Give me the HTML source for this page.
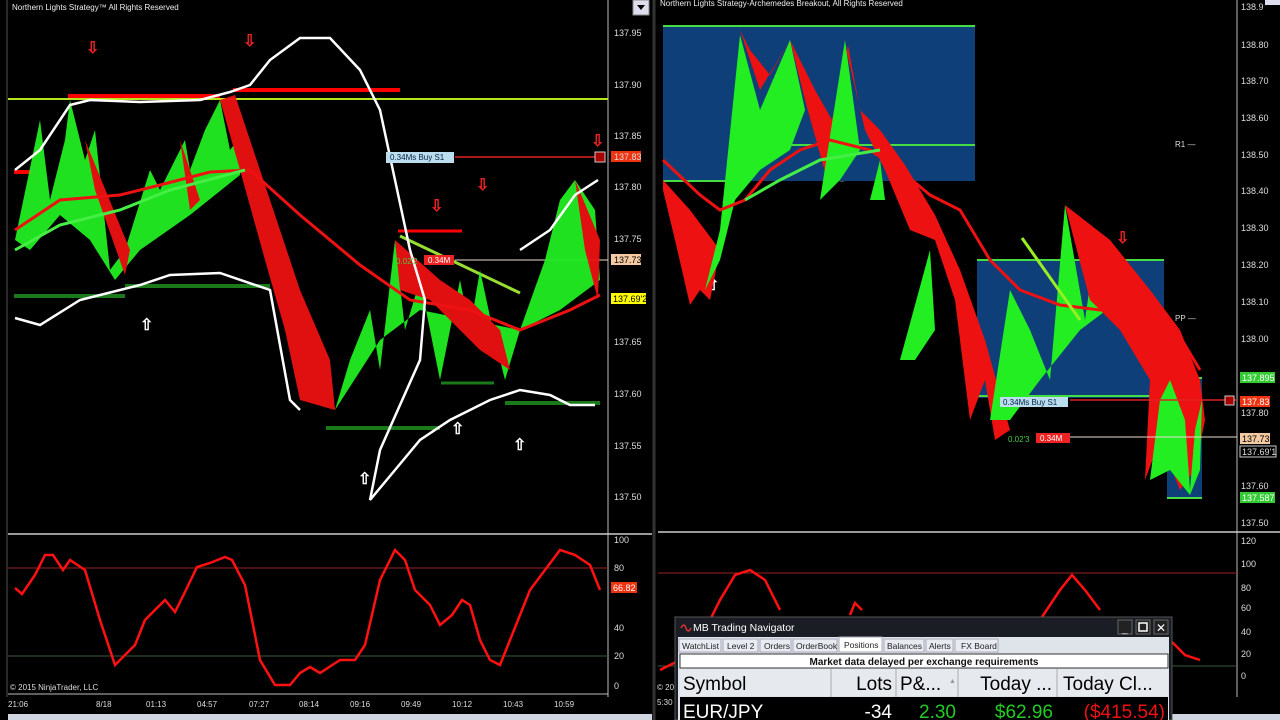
<!DOCTYPE html>
<html><head><meta charset="utf-8"><style>
html,body{margin:0;padding:0;background:#000;width:1280px;height:720px;overflow:hidden;font-family:"Liberation Sans",sans-serif}
svg{display:block}
.ax{fill:#ddd;font-size:9px;font-family:"Liberation Sans",sans-serif}
.t{fill:#eee;font-size:8px}
</style></head><body>
<svg width="1280" height="720" viewBox="0 0 1280 720" xmlns="http://www.w3.org/2000/svg">
<rect width="1280" height="720" fill="#000"/>
<line x1="7" y1="0" x2="7" y2="697" stroke="#555"/>
<line x1="608" y1="0" x2="608" y2="697" stroke="#bbb"/>
<line x1="8" y1="534" x2="652" y2="534" stroke="#ccc" stroke-width="1.5"/>
<line x1="8" y1="694" x2="608" y2="694" stroke="#bbb"/>
<line x1="654" y1="0" x2="654" y2="720" stroke="#333" stroke-width="3"/>
<line x1="1237" y1="0" x2="1237" y2="697" stroke="#bbb"/>
<line x1="658" y1="532" x2="1280" y2="532" stroke="#ccc" stroke-width="1.5"/>
<text x="12" y="10" class="t">Northern Lights Strategy™ All Rights Reserved</text>
<text x="660" y="6" class="t">Northern Lights Strategy-Archemedes Breakout, All Rights Reserved</text>
<rect x="633" y="0" width="16" height="15" fill="#dde" stroke="#888"/><path d="M637 5 L645 5 L641 10Z" fill="#000"/>
<rect x="1265" y="0" width="15" height="5" fill="#dde"/>

<g class="ax">
<text x="614" y="36">137.95</text><text x="614" y="88">137.90</text><text x="614" y="139">137.85</text>
<text x="614" y="190">137.80</text><text x="614" y="242">137.75</text><text x="614" y="345">137.65</text>
<text x="614" y="397">137.60</text><text x="614" y="449">137.55</text><text x="614" y="500">137.50</text>
<text x="614" y="543">100</text><text x="614" y="571">80</text><text x="614" y="631">40</text><text x="614" y="659">20</text><text x="614" y="689">0</text>
</g>
<rect x="611" y="151" width="30" height="11" fill="#e31"/><text x="614" y="160" class="ax" fill="#fff">137.83</text>
<rect x="611" y="254" width="30" height="11" fill="#f2c9a0"/><text x="614" y="263" class="ax" style="fill:#000">137.73</text>
<rect x="611" y="293" width="35" height="11" fill="#ff0"/><text x="613" y="302" class="ax" style="fill:#000">137.69'2</text>
<rect x="611" y="582" width="26" height="11" fill="#e31"/><text x="613" y="591" class="ax" style="fill:#fff">66.82</text>

<line x1="8" y1="99" x2="608" y2="99" stroke="#b5e61d" stroke-width="2"/>
<line x1="68" y1="96" x2="220" y2="96" stroke="#f00" stroke-width="4"/>
<line x1="233" y1="90" x2="400" y2="90" stroke="#f00" stroke-width="4"/>
<line x1="14" y1="172" x2="32" y2="172" stroke="#f00" stroke-width="4"/>
<line x1="398" y1="231" x2="462" y2="231" stroke="#f00" stroke-width="3"/>
<line x1="14" y1="296" x2="125" y2="296" stroke="#1a7a1a" stroke-width="4"/>
<line x1="125" y1="286" x2="270" y2="286" stroke="#1a7a1a" stroke-width="4"/>
<line x1="326" y1="428" x2="440" y2="428" stroke="#1a7a1a" stroke-width="4"/>
<line x1="441" y1="383" x2="494" y2="383" stroke="#1a7a1a" stroke-width="3"/>
<line x1="505" y1="403" x2="600" y2="403" stroke="#1a7a1a" stroke-width="4"/>
<line x1="455" y1="157" x2="598" y2="157" stroke="#d22" stroke-width="1.5"/>
<line x1="455" y1="260" x2="608" y2="260" stroke="#e8e0d0" stroke-width="1"/>
<line x1="400" y1="236" x2="520" y2="293" stroke="#9d3" stroke-width="3"/>

<g opacity="0.95">
<path d="M15 240 L40 120 L50 200 L65 140 L70 100 L85 160 L95 130 L110 270 L125 250 L150 170 L160 190 L185 140 L190 170 L205 130 L220 100 L230 150 L245 130 L240 175 L190 215 L140 250 L115 280 L90 240 L60 215 L30 250Z" fill="#2e2" />
<path d="M85 140 L130 250 L125 275 L95 190Z M180 140 L200 200 L190 210Z" fill="#e11"/>
<path d="M220 100 L235 95 L270 200 L300 290 L330 360 L335 410 L300 400 L285 330 L265 260 L240 170Z" fill="#e11"/>
<path d="M335 410 L350 360 L370 310 L380 370 L395 240 L405 330 L420 280 L440 380 L460 280 L470 330 L480 270 L495 340 L505 380 L520 330 L545 260 L560 200 L575 180 L595 210 L600 280 L560 310 L520 330 L470 320 L420 310 L380 340Z" fill="#2e2"/>
<path d="M395 240 L440 280 L470 300 L500 330 L510 370 L480 350 L460 330 L430 300 L400 290Z" fill="#e11"/>
<path d="M575 180 L600 240 L598 300 L585 250Z" fill="#e11"/>
</g>
<path d="M15 230 L60 200 L120 195 L160 185 L210 172 L250 170 L300 215 L360 265 L410 300 L470 310 L520 330 L570 310 L600 295" stroke="#e11" stroke-width="3" fill="none"/>
<path d="M15 250 L60 225 L120 210 L170 190 L245 170" stroke="#4e4" stroke-width="3" fill="none"/>
<path d="M15 170 L40 150 L70 105 L90 100 L140 102 L200 100 L230 92 L250 85 L270 60 L300 38 L330 38 L360 70 L380 110 L395 180 L410 250 L425 300 L420 360 L380 450 L370 500 L395 470 L420 440 L450 420 L490 400 L520 390 L550 395 L570 405 L595 405" stroke="#fff" stroke-width="2.5" fill="none"/>
<path d="M15 318 L40 325 L80 300 L120 290 L140 285 L170 275 L220 273 L270 290 L290 400 L300 410" stroke="#fff" stroke-width="2.5" fill="none"/>
<path d="M520 250 L550 230 L575 195 L598 180" stroke="#fff" stroke-width="2.5" fill="none"/>
<rect x="386" y="152" width="68" height="11" fill="#bde"/><text x="390" y="160" style="font-size:8px;fill:#024">0.34Ms  Buy S1</text>
<rect x="595" y="152" width="10" height="10" fill="#a00" stroke="#ccc"/>
<text x="396" y="264" style="font-size:8px;fill:#4c4">0.02'2</text>
<rect x="424" y="255" width="30" height="10" fill="#e22"/><text x="428" y="263" style="font-size:8px;fill:#fff">0.34M</text>

<g fill="#e22" font-size="16" font-weight="bold">
<text x="86" y="53">⇩</text><text x="243" y="46">⇩</text><text x="430" y="211">⇩</text><text x="476" y="190">⇩</text><text x="591" y="146">⇩</text>
<text x="797" y="50">⇩</text><text x="858" y="65">⇩</text><text x="1020" y="287">⇩</text><text x="1116" y="243">⇩</text>
</g>
<g fill="#fff" font-size="16" font-weight="bold">
<text x="140" y="330">⇧</text><text x="358" y="484">⇧</text><text x="451" y="434">⇧</text><text x="513" y="450">⇧</text>
<text x="706" y="290">⇧</text><text x="835" y="181">⇧</text><text x="1002" y="388">⇧</text>
</g>

<line x1="8" y1="568" x2="608" y2="568" stroke="#922"/>
<line x1="8" y1="656" x2="608" y2="656" stroke="#3a5a3a"/>
<path d="M15 588 L22 594 L35 575 L45 555 L53 555 L63 570 L70 560 L85 570 L100 620 L115 665 L125 655 L135 645 L145 620 L165 600 L175 612 L185 592 L197 567 L210 563 L225 557 L232 560 L245 585 L260 660 L275 685 L290 685 L300 673 L310 667 L320 673 L340 660 L355 660 L365 645 L380 580 L395 550 L405 560 L415 590 L430 605 L440 625 L452 615 L462 600 L470 605 L480 640 L490 660 L500 665 L510 640 L530 590 L545 570 L560 550 L575 555 L590 565 L600 590" stroke="#f11" stroke-width="2.5" fill="none"/>
<text x="10" y="690" style="font-size:8px;fill:#ddd">© 2015 NinjaTrader, LLC</text>
<g class="ax" style="font-size:8px">
<text x="8" y="707">21:06</text><text x="96" y="707">8/18</text><text x="146" y="707">01:13</text><text x="197" y="707">04:57</text><text x="249" y="707">07:27</text><text x="299" y="707">08:14</text><text x="350" y="707">09:16</text><text x="401" y="707">09:49</text><text x="452" y="707">10:12</text><text x="503" y="707">10:43</text><text x="554" y="707">10:59</text>
</g>
<rect x="8" y="714" width="644" height="6" fill="#cfd6df"/>

<!-- RIGHT -->
<rect x="663" y="26" width="312" height="155" fill="#0e3f78"/>
<line x1="663" y1="26" x2="975" y2="26" stroke="#4d4" stroke-width="2"/>
<line x1="745" y1="145" x2="975" y2="145" stroke="#4d4" stroke-width="2"/>
<line x1="663" y1="181" x2="745" y2="181" stroke="#4d4" stroke-width="2"/>
<rect x="977" y="260" width="187" height="138" fill="#0e3f78"/>
<line x1="977" y1="260" x2="1164" y2="260" stroke="#4d4" stroke-width="2"/>
<line x1="977" y1="396" x2="1160" y2="396" stroke="#4d4" stroke-width="2"/>
<rect x="1167" y="378" width="35" height="120" fill="#0e3f78"/>
<line x1="1167" y1="378" x2="1202" y2="378" stroke="#4d4" stroke-width="2"/>
<line x1="1167" y1="498" x2="1202" y2="498" stroke="#4d4" stroke-width="2"/>
<!-- red left -->
<path d="M663 190 L675 240 L690 305 L700 290 L710 300 L720 250 L705 230 L690 210 L663 180Z" fill="#e11"/>
<!-- red fans upper -->
<path d="M740 30 L760 90 L790 40 L805 100 L830 190 L845 45 L865 130 L885 170 L910 230 L935 240 L955 300 L970 420 L985 380 L995 440 L1010 430 L985 340 L960 270 L935 215 L905 165 L880 130 L860 110 L848 45 L832 120 L815 90 L800 60 L790 40 L770 75 L750 50Z" fill="#e11"/>
<path d="M705 290 L720 230 L740 35 L760 110 L790 40 L805 110 L790 150 L760 170 L735 200 L720 260Z" fill="#2e2"/>
<path d="M820 200 L845 40 L860 150 L840 180Z M870 200 L880 160 L885 200Z" fill="#2e2"/>
<path d="M900 360 L930 250 L935 330 L915 360Z M990 420 L1010 290 L1030 330 L1050 380 L1065 205 L1085 320 L1095 250 L1110 270 L1120 300 L1080 330 L1040 380 L1010 420Z" fill="#2e2"/>
<path d="M1065 205 L1110 240 L1150 290 L1180 330 L1200 380 L1205 420 L1195 470 L1180 490 L1160 440 L1145 480 L1150 380 L1120 330 L1090 300Z" fill="#e11"/>
<path d="M1150 480 L1160 400 L1170 380 L1185 420 L1190 490 L1195 430 L1202 400 L1200 470 L1190 495 L1170 470Z" fill="#2e2"/>
<path d="M663 160 L700 195 L720 210 L745 200 L770 170 L800 150 L830 140 L870 150 L900 170 L930 195 L960 210 L990 260 L1020 290 L1060 305 L1100 310 L1140 300 L1170 320 L1200 370" stroke="#e11" stroke-width="3" fill="none"/>
<path d="M745 200 L780 180 L820 160 L850 155 L880 150" stroke="#4e4" stroke-width="3" fill="none"/>
<line x1="1022" y1="238" x2="1080" y2="320" stroke="#9e2" stroke-width="3"/>
<line x1="1070" y1="400" x2="1237" y2="400" stroke="#d22" stroke-width="1.5"/>
<line x1="1070" y1="437" x2="1237" y2="437" stroke="#e8e0d0"/>
<rect x="1000" y="397" width="68" height="10" fill="#bde"/><text x="1003" y="405" style="font-size:8px;fill:#024">0.34Ms  Buy S1</text>
<text x="1008" y="442" style="font-size:8px;fill:#4c4">0.02'3</text>
<rect x="1036" y="433" width="34" height="10" fill="#e22"/><text x="1040" y="441" style="font-size:8px;fill:#fff">0.34M</text>
<rect x="1225" y="396" width="9" height="9" fill="#a00" stroke="#ccc"/>
<text x="1175" y="147" style="font-size:8px;fill:#ddd">R1 —</text>
<text x="1175" y="321" style="font-size:8px;fill:#ddd">PP —</text>
<g class="ax">
<text x="1241" y="10">138.9</text><text x="1241" y="48">138.80</text><text x="1241" y="84">138.70</text><text x="1241" y="121">138.60</text><text x="1241" y="158">138.50</text><text x="1241" y="194">138.40</text><text x="1241" y="231">138.30</text><text x="1241" y="268">138.20</text><text x="1241" y="305">138.10</text><text x="1241" y="342">138.00</text><text x="1241" y="416">137.80</text><text x="1241" y="489">137.60</text><text x="1241" y="526">137.50</text>
<text x="1241" y="544">120</text><text x="1241" y="567">100</text><text x="1241" y="591">80</text><text x="1241" y="611">60</text><text x="1241" y="635">40</text><text x="1241" y="657">20</text><text x="1241" y="679">0</text>
</g>
<rect x="1240" y="372" width="35" height="11" fill="#3c3"/><text x="1242" y="381" class="ax" style="fill:#fff">137.895</text>
<rect x="1240" y="396" width="30" height="11" fill="#e31"/><text x="1242" y="405" class="ax" style="fill:#fff">137.83</text>
<rect x="1240" y="433" width="30" height="11" fill="#f2c9a0"/><text x="1242" y="442" class="ax" style="fill:#000">137.73</text>
<rect x="1240" y="446" width="36" height="11" fill="#000" stroke="#ccc"/><text x="1242" y="455" class="ax">137.69'1</text>
<rect x="1240" y="492" width="35" height="11" fill="#3c3"/><text x="1242" y="501" class="ax" style="fill:#fff">137.587</text>
<line x1="658" y1="573" x2="1237" y2="573" stroke="#922"/>
<line x1="658" y1="666" x2="1237" y2="666" stroke="#3a5a3a"/>
<path d="M660 670 L680 660 L700 640 L720 600 L735 575 L750 570 L765 580 L780 610 M850 615 L855 603 L862 610 M1040 620 L1060 590 L1072 575 L1085 590 L1100 610 M1170 640 L1185 655 L1200 660" stroke="#f11" stroke-width="2.5" fill="none"/>
<text x="657" y="690" style="font-size:8px;fill:#ddd">© 20</text><text x="657" y="705" style="font-size:8px;fill:#ddd">5:30</text>
<rect x="1170" y="714" width="110" height="6" fill="#cfd6df"/>

<rect x="675" y="617" width="497" height="103" fill="#1a1d24" stroke="#555"/>
<path d="M681 628 q3 -6 5 0 q2 6 5 0" stroke="#d33" stroke-width="1.5" fill="none"/>
<text x="693" y="631" style="font-size:10.5px;fill:#fff">MB Trading Navigator</text>
<rect x="1118" y="620" width="14" height="14" fill="#222" stroke="#666"/><text x="1122" y="632" style="font-size:10px;fill:#fff">_</text>
<rect x="1136" y="620" width="14" height="14" fill="#222" stroke="#666"/><rect x="1139" y="623" width="8" height="8" fill="none" stroke="#fff" stroke-width="1.5"/>
<rect x="1154" y="620" width="14" height="14" fill="#222" stroke="#666"/><text x="1156" y="632" style="font-size:12px;fill:#fff">✕</text>
<rect x="678" y="637" width="491" height="83" fill="#dfe3ea"/>
<g style="font-size:8.5px;fill:#222">
<rect x="679" y="639" width="42" height="13" fill="#e8ecf2" stroke="#aab"/><text x="682" y="649">WatchList</text>
<rect x="723" y="639" width="35" height="13" fill="#e8ecf2" stroke="#aab"/><text x="727" y="649">Level 2</text>
<rect x="760" y="639" width="31" height="13" fill="#e8ecf2" stroke="#aab"/><text x="764" y="649">Orders</text>
<rect x="793" y="639" width="44" height="13" fill="#e8ecf2" stroke="#aab"/><text x="796" y="649">OrderBook</text>
<rect x="839" y="637" width="43" height="15" fill="#fff" stroke="#aab"/><text x="844" y="648">Positions</text>
<rect x="884" y="639" width="40" height="13" fill="#e8ecf2" stroke="#aab"/><text x="887" y="649">Balances</text>
<rect x="926" y="639" width="27" height="13" fill="#e8ecf2" stroke="#aab"/><text x="929" y="649">Alerts</text>
<rect x="955" y="639" width="43" height="13" fill="#e8ecf2" stroke="#aab"/><text x="961" y="649">FX Board</text>
</g>
<rect x="680" y="654" width="488" height="14" fill="#fff" stroke="#333"/>
<text x="924" y="665" text-anchor="middle" style="font-size:10px;font-weight:bold;fill:#111">Market data delayed per exchange requirements</text>
<rect x="680" y="669" width="488" height="27" fill="#e6e9ee"/>
<g stroke="#aaa"><line x1="831" y1="669" x2="831" y2="720"/><line x1="896" y1="669" x2="896" y2="720"/><line x1="958" y1="669" x2="958" y2="720"/><line x1="1057" y1="669" x2="1057" y2="720"/></g>
<g style="font-size:19px;fill:#000">
<text x="683" y="690">Symbol</text><text x="892" y="690" text-anchor="end">Lots</text><text x="900" y="690">P&amp;...</text><text x="1052" y="690" text-anchor="end">Today ...</text><text x="1063" y="690">Today Cl...</text>
</g>
<text x="949" y="683" style="font-size:7px;fill:#999">▲</text>
<rect x="680" y="697" width="488" height="23" fill="#000"/>
<g style="font-size:19px">
<text x="683" y="718" fill="#fff">EUR/JPY</text><text x="892" y="718" text-anchor="end" fill="#fff">-34</text><text x="956" y="718" text-anchor="end" fill="#2c2">2.30</text><text x="1053" y="718" text-anchor="end" fill="#2c2">$62.96</text><text x="1165" y="718" text-anchor="end" fill="#e11">($415.54)</text>
</g>
</svg>
</body></html>
